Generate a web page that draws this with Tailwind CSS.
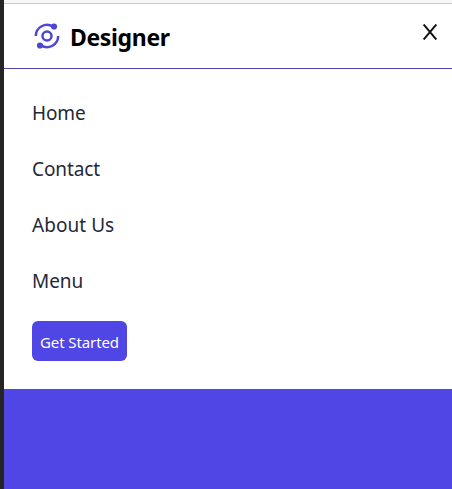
<!DOCTYPE html>
<html lang="en">
<head>
<meta charset="utf-8">
<title>Designer</title>
<script src="https://cdn.jsdelivr.net/npm/@tailwindcss/browser@4"></script>
</head>
<body class="h-screen overflow-hidden bg-white font-['Noto_Sans','Open_Sans',sans-serif]">
<div class="flex h-full flex-col border-l-4 border-[#272523]">
  <div class="h-1 shrink-0 border-b border-[#c8c8c8] bg-[#f7f7f7]"></div>
  <header class="flex h-[65px] shrink-0 items-start justify-between border-b border-[#5146a8] pl-7 pr-[15px]">
    <a class="flex items-start pt-[17px]">
      <svg class="h-[30px] w-[30px] text-[#5046d5]" viewBox="0 0 30 30" fill="none" stroke="currentColor" stroke-width="2.5">
        <circle cx="15" cy="15" r="4.5"/>
        <path d="M3.8 15A11.2 11.2 0 0 1 21 5.6"/>
        <path d="M26.2 15A11.2 11.2 0 0 1 9 24.4"/>
        <circle cx="22" cy="5.5" r="3.1" fill="currentColor" stroke="none"/>
        <circle cx="8" cy="24.5" r="3.1" fill="currentColor" stroke="none"/>
      </svg>
      <span class="ml-2 text-[23px] font-bold leading-8 tracking-[-0.35px] text-black">Designer</span>
    </a>
    <svg class="mt-5 h-4 w-[14px]" viewBox="0 0 14 16" fill="none" stroke="#111" stroke-width="1.9"><path d="M.7.5 13.3 15.5M13.3.5.7 15.5"/></svg>
  </header>
  <nav class="flex h-80 shrink-0 flex-col items-start gap-7 px-7 pt-[30px] text-[19px] leading-7 text-[#1f2937]">
    <a class="tracking-[-0.1px]">Home</a>
    <a class="tracking-[-0.1px]">Contact</a>
    <a class="tracking-[0.05px]">About Us</a>
    <a class="tracking-[-0.1px]">Menu</a>
    <button class="-mt-[2px] h-10 w-[95px] whitespace-nowrap rounded-md bg-[#4f46e5] pt-px text-[15px] leading-6 tracking-[-0.1px] text-white">Get Started</button>
  </nav>
  <div class="grow bg-[#4f46e5]"></div>
</div>
</body>
</html>
